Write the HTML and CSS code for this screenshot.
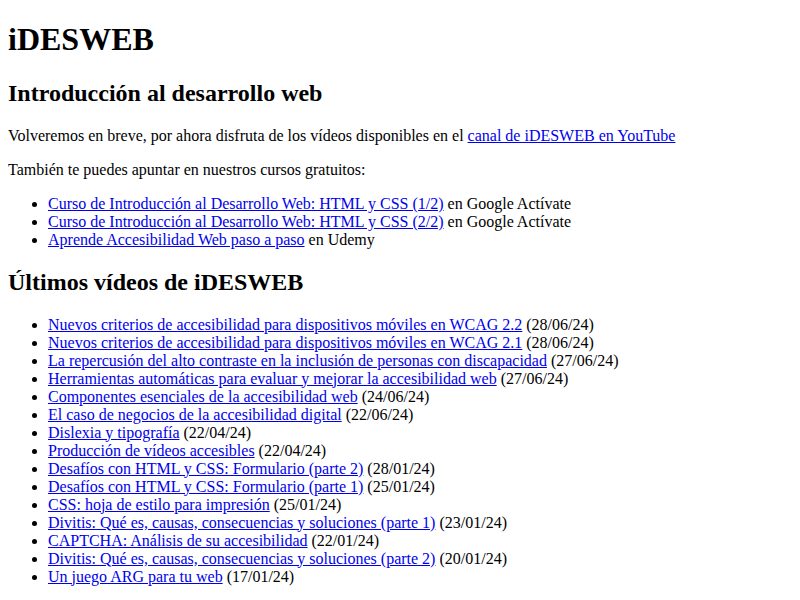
FILE: index.html
```html
<!DOCTYPE html>
<html lang="es">
<head>
    <meta charset="UTF-8">
    <title>iDESWEB</title>
    <link rel="stylesheet" href="styles.css">
</head>
<body>
    <h1>iDESWEB</h1>

    <h2>Introducción al desarrollo web</h2>
    <p>Volveremos en breve, por ahora disfruta de los vídeos disponibles en el <a href="#">canal de iDESWEB en YouTube</a></p>
    <p>También te puedes apuntar en nuestros cursos gratuitos:</p>
    <ul>
        <li><a href="#">Curso de Introducción al Desarrollo Web: HTML y CSS (1/2)</a> en Google Actívate</li>
        <li><a href="#">Curso de Introducción al Desarrollo Web: HTML y CSS (2/2)</a> en Google Actívate</li>
        <li><a href="#">Aprende Accesibilidad Web paso a paso</a> en Udemy</li>
    </ul>

    <h2>Últimos vídeos de iDESWEB</h2>
    <ul>
        <li><a href="#">Nuevos criterios de accesibilidad para dispositivos móviles en WCAG 2.2</a> (28/06/24)</li>
        <li><a href="#">Nuevos criterios de accesibilidad para dispositivos móviles en WCAG 2.1</a> (28/06/24)</li>
        <li><a href="#">La repercusión del alto contraste en la inclusión de personas con discapacidad</a> (27/06/24)</li>
        <li><a href="#">Herramientas automáticas para evaluar y mejorar la accesibilidad web</a> (27/06/24)</li>
        <li><a href="#">Componentes esenciales de la accesibilidad web</a> (24/06/24)</li>
        <li><a href="#">El caso de negocios de la accesibilidad digital</a> (22/06/24)</li>
        <li><a href="#">Dislexia y tipografía</a> (22/04/24)</li>
        <li><a href="#">Producción de vídeos accesibles</a> (22/04/24)</li>
        <li><a href="#">Desafíos con HTML y CSS: Formulario (parte 2)</a> (28/01/24)</li>
        <li><a href="#">Desafíos con HTML y CSS: Formulario (parte 1)</a> (25/01/24)</li>
        <li><a href="#">CSS: hoja de estilo para impresión</a> (25/01/24)</li>
        <li><a href="#">Divitis: Qué es, causas, consecuencias y soluciones (parte 1)</a> (23/01/24)</li>
        <li><a href="#">CAPTCHA: Análisis de su accesibilidad</a> (22/01/24)</li>
        <li><a href="#">Divitis: Qué es, causas, consecuencias y soluciones (parte 2)</a> (20/01/24)</li>
        <li><a href="#">Un juego ARG para tu web</a> (17/01/24)</li>
    </ul>
</body>
</html>
```

FILE: styles.css
```css
html {
    overflow-y: scroll;
}
body {
    font-family: "Liberation Serif", "Times New Roman", serif;
    color: #000;
    background: #fff;
}
h1 {
    margin-top: 0.42em;
}
a {
    color: #0000ee;
}
::-webkit-scrollbar {
    width: 17px;
    background: #f1f1f1;
}
::-webkit-scrollbar-thumb {
    background: #c1c1c1;
    border: 2px solid #f1f1f1;
}
```
